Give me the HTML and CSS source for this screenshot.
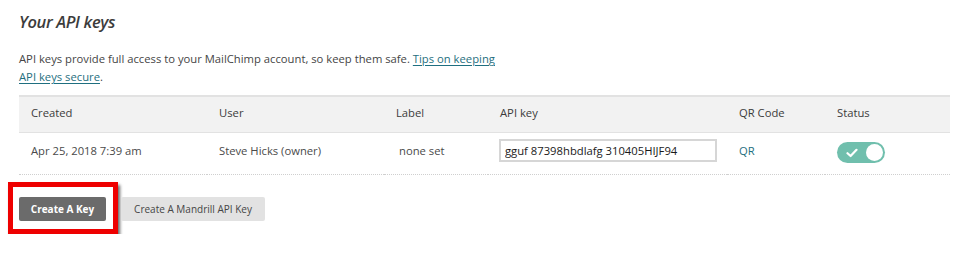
FILE: index.html
```html
<!DOCTYPE html>
<html>
<head>
<meta charset="utf-8">
<link rel="stylesheet" href="styles.css">
</head>
<body>
<div class="page">
  <h2 class="title">Your API keys</h2>
  <p class="intro">API keys provide full access to your MailChimp account, so keep them safe. <a href="#">Tips on keeping<br>API keys secure</a>.</p>
  <table class="keys">
    <colgroup>
      <col class="c1"><col class="c2"><col class="c3"><col class="c4"><col class="c5"><col class="c6">
    </colgroup>
    <thead>
      <tr><th>Created</th><th>User</th><th>Label</th><th>API key</th><th>QR Code</th><th>Status</th></tr>
    </thead>
    <tbody>
      <tr>
        <td>Apr 25, 2018 7:39 am</td>
        <td>Steve Hicks (owner)</td>
        <td class="label">none set</td>
        <td><input class="key" type="text" value="gguf 87398hbdlafg 310405HIJF94" readonly></td>
        <td><a class="qr" href="#">QR</a></td>
        <td class="status">
          <span class="toggle">
            <svg class="check" width="12" height="10" viewBox="0 0 12 10"><path d="M1.5 5.2 L4.6 8 L10.5 1.8" fill="none" stroke="#fff" stroke-width="2.2" stroke-linecap="round" stroke-linejoin="round"/></svg>
            <span class="knob"></span>
          </span>
        </td>
      </tr>
    </tbody>
  </table>
  <div class="actions">
    <span class="highlight"><button class="btn btn-dark">Create A Key</button></span>
    <button class="btn btn-light">Create A Mandrill API Key</button>
  </div>
</div>
</body>
</html>
```
FILE: styles.css
```css
html, body { margin: 0; padding: 0; background: #fff; }
body { font-family: "Open Sans", "DejaVu Sans", sans-serif; color: #454545; }
.page { padding: 0 11px 0 19px; }
.title {
  margin: 0; padding-top: 10px;
  font-size: 16.5px; font-style: italic; font-weight: 600;
  color: #3c3c3c; line-height: 24px; letter-spacing: -0.35px;
}
.intro {
  margin: 16px 0 0; font-size: 11.25px; line-height: 18px; color: #454545;
}
.intro a { color: #1f6f80; text-decoration: underline; text-underline-offset: 2px; }
.keys {
  margin-top: 9px; width: 931px; border-collapse: collapse; table-layout: fixed;
  font-size: 11.25px;
}
.c1 { width: 188px; } .c2 { width: 177px; } .c3 { width: 104px; }
.c4 { width: 239px; } .c5 { width: 98px; } .c6 { width: 125px; }
.keys th {
  background: #f2f2f2; text-align: left; font-weight: 400; color: #3b3b3b;
  height: 31px; padding: 0 0 4px 12px;
  border-top: 2px solid #e2e2e2; border-bottom: 1px solid #e2e2e2;
}
.keys td {
  height: 35px; padding: 0 0 6px 12px; color: #4a4a4a;
  border-bottom: 1px dotted #cfcfcf;
}
.keys td.label { padding-left: 15px; }
.keys td.status { padding-bottom: 2px; height: 39px; }
.key {
  box-sizing: border-box; width: 218px; height: 23px; margin: 0 0 0 -1px;
  border: 2px solid #d6d6d6; padding: 0 0 0 4px;
  font-family: "Open Sans", sans-serif; font-size: 11.25px; color: #1a1a1a; background: #fff;
  outline: none; display: block;
}
.qr { color: #1f6f80; text-decoration: none; }
.toggle {
  display: flex; align-items: center; justify-content: space-between;
  width: 48px; height: 21px; border-radius: 11px; background: #70bfad;
  box-sizing: border-box; padding: 0 2px 0 9px;
}
.check { display: block; }
.knob { width: 17px; height: 17px; border-radius: 50%; background: #fff; display: block; }
.actions { display: flex; align-items: flex-start; gap: 3px; margin-top: 7px; }
.highlight {
  display: block; margin-left: -11px;
  border: 5px solid #ee0000; padding: 10px 7px 8px 6px;
  box-shadow: 2px 3px 3px rgba(0,0,0,0.6);
}
.btn {
  display: block; border: 0; border-radius: 2px; height: 24px;
  font-family: "Open Sans", sans-serif; font-size: 10px; line-height: 24px; padding: 0;
  cursor: pointer;
}
.btn-dark { width: 87px; background: #6b6b6b; color: #fff; font-weight: 700; }
.btn-light { width: 144px; margin-top: 15px; background: #e2e2e2; color: #454545; font-weight: 400; }
```
